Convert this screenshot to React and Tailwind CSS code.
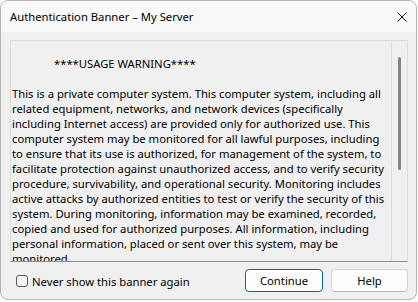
const lines = [
  "",
  "__USAGE__",
  "",
  "This is a private computer system. This computer system, including all",
  "related equipment, networks, and network devices (specifically",
  "including Internet access) are provided only for authorized use. This",
  "computer system may be monitored for all lawful purposes, including",
  "to ensure that its use is authorized, for management of the system, to",
  "facilitate protection against unauthorized access, and to verify security",
  "procedure, survivability, and operational security. Monitoring includes",
  "active attacks by authorized entities to test or verify the security of this",
  "system. During monitoring, information may be examined, recorded,",
  "copied and used for authorized purposes. All information, including",
  "personal information, placed or sent over this system, may be",
  "monitored.",
];

function CloseIcon() {
  return (
    <svg width="10" height="10" viewBox="0 0 10 10" fill="none">
      <path d="M0.5 0.5 L9.5 9.5 M9.5 0.5 L0.5 9.5" stroke="#1a1a1a" strokeWidth="1" />
    </svg>
  );
}

export default function App() {
  return (
    <div
      className="w-[418px] h-[302px] bg-white text-black"
      style={{ fontFamily: "'Noto Sans', 'Open Sans', sans-serif" }}
    >
      <div className="w-[417px] h-[300px] rounded-[8px] border border-[#b4b4b4] overflow-hidden flex flex-col bg-[#f0f0f0] text-[11.25px] leading-[15px]">
        {/* Title bar */}
        <div className="h-[31px] shrink-0 bg-[#f9f9f9] flex items-center justify-between pl-[9px] pr-[9px]">
          <span className="whitespace-nowrap">Authentication Banner – My Server</span>
          <CloseIcon />
        </div>

        {/* Body */}
        <div className="flex-1 flex flex-col pt-[8px] pb-[7px] pl-[9px] pr-[8px]">
          <div className="h-[222px] w-[398px] flex border border-[#dcdcdc] border-b-[#8f8f8f] overflow-hidden">
            <div className="flex-1 pl-[1px] overflow-hidden">
              {lines.map((l, i) =>
                l === "__USAGE__" ? (
                  <div key={i} className="h-[15px] whitespace-pre pl-[42px]">****USAGE WARNING****</div>
                ) : (
                  <div key={i} className="h-[15px] whitespace-pre">{l}</div>
                )
              )}
            </div>
            <div className="w-[16px] shrink-0 border-l border-[#dcdcdc] flex justify-center">
              <div className="mt-[16px] w-[3px] h-[113px] rounded-full bg-[#858585]" />
            </div>
          </div>

          <div className="mt-[7px] h-[23px] flex items-center">
            <div className="flex items-center pl-[6px] gap-[4px] flex-1">
              <div className="w-[12px] h-[12px] rounded-[3px] border border-[#5c5c5c] bg-[#f6f6f6]" />
              <span className="whitespace-nowrap translate-y-[1px]">Never show this banner again</span>
            </div>
            <button className="w-[78px] h-[23px] rounded-[4px] border border-[#0067c0] bg-[#fdfdfd] text-black flex items-center justify-center">
              Continue
            </button>
            <button className="ml-[8px] w-[77px] h-[23px] rounded-[4px] border border-[#d3d3d3] border-b-[#bcbcbc] bg-[#fdfdfd] text-black flex items-center justify-center">
              Help
            </button>
          </div>
        </div>
      </div>
    </div>
  );
}
